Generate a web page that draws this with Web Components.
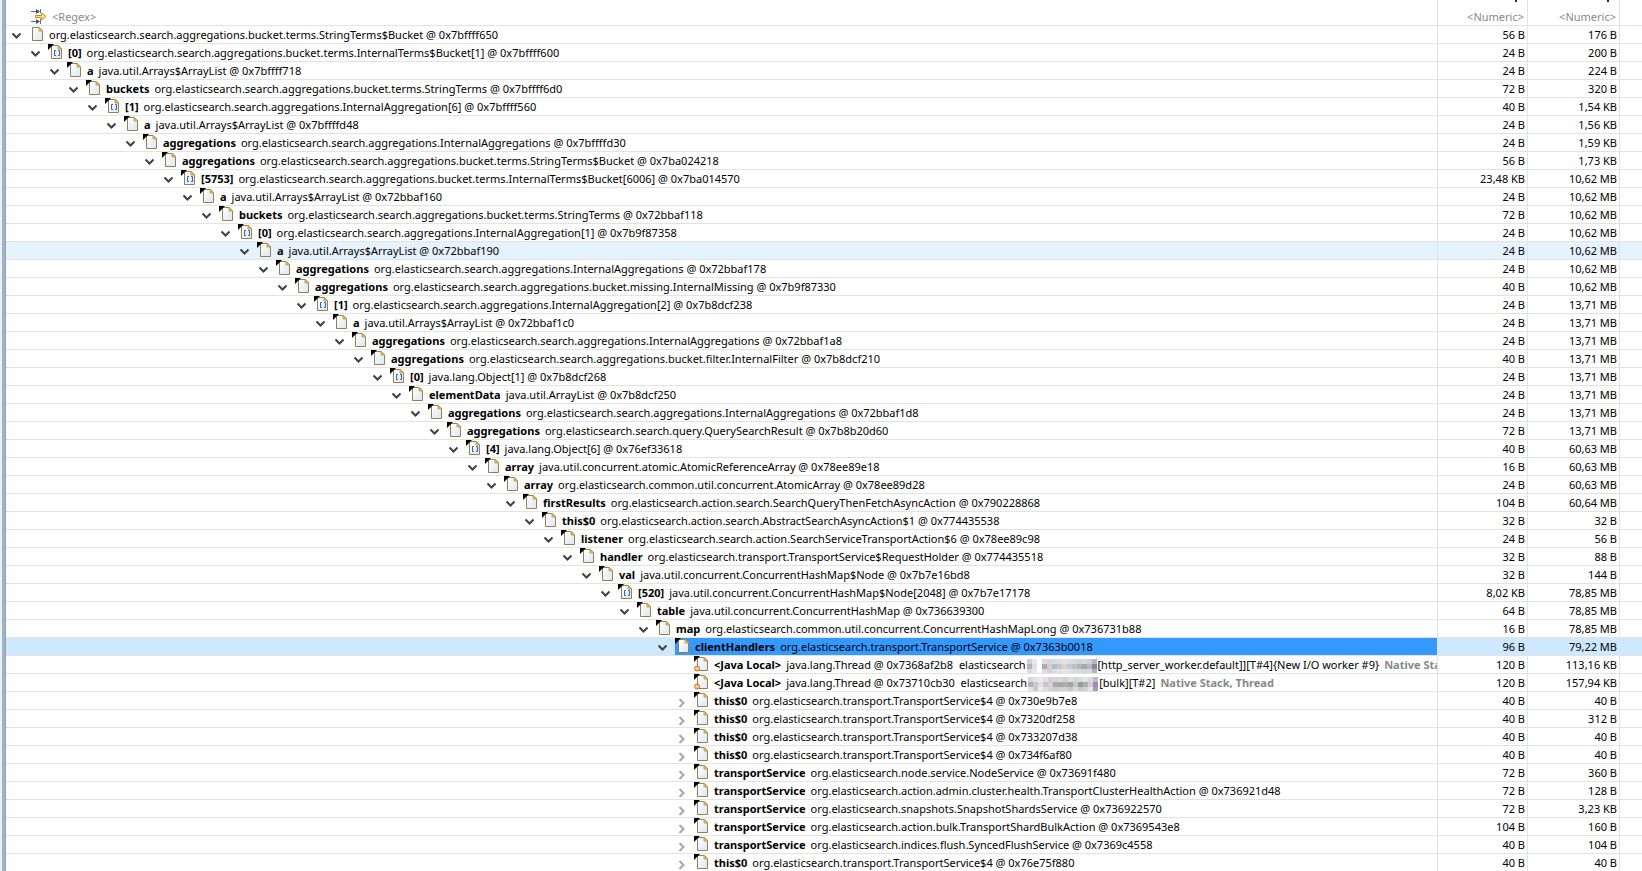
<!DOCTYPE html>
<html lang="en">
<head>
<meta charset="utf-8">
<title>Path to GC Roots</title>
<style>
    html, body { height: 100%; margin: 0; }
    body {
        overflow: hidden;
        background: #fff;
        color: #000;
        font-family: "Noto Sans", "Open Sans", sans-serif;
        font-size: 11px;
        line-height: 17px;
    }
</style>
</head>
<body>
<view-frame>
    <heap-tree></heap-tree>
</view-frame>

<script>
/**
 * <view-frame>
 * Left window border with the view inside
 */
class ViewFrame extends HTMLElement {
    constructor() {
        super();
        this.attachShadow({ mode: 'open' });
    }

    connectedCallback() {
        this.shadowRoot.innerHTML = `
            <style>
                :host {
                    display: grid;
                    grid-template-columns: 2px 3px 1px minmax(0, 1fr);
                    height: 100vh;
                    overflow: hidden;
                }
                .outer { background: #f0f0f0; }
                .accent { background: #99b4d1; }
                .inner { background: #a0a0a0; }
            </style>
            <div class="outer"></div>
            <div class="accent"></div>
            <div class="inner"></div>
            <main><slot></slot></main>
        `;
    }
}
customElements.define('view-frame', ViewFrame);


/**
 * <object-icon>
 * Attributes: kind (root | object | array | local | filter)
 */
const PAGE = `
    <path d="M3.5 1.5h7l3 3v10h-10z" fill="url(#sheet)" stroke="#94804a"/>
    <path d="M10 1.5v3.500h3.500z" fill="#e8c069" stroke="#c9a04c"/>`;
const CORNER = `<path d="M0 0h6l-6 6z" fill="#000"/>`;
const ICONS = {
    root: PAGE,
    object: PAGE + CORNER,
    array: PAGE + CORNER + `
        <path d="M8 6.5h-1.5v5h1.5M10 6.5h1.5v5h-1.5" fill="none" stroke="#2c68a6"/>`,
    local: PAGE + CORNER + `<circle cx="3" cy="12.5" r="2.5" fill="#fbc98a" stroke="#c9702a"/>`,
    filter: `
        <path d="M0 3.5h6M0 13.5h6M9.5 1v4M9.5 11v5" fill="none" stroke="#5b6f86"/>
        <path d="M5 1l4 2.5-4 2.5zM5 11l4 2.5-4 2.5z" fill="#3f566f"/>
        <path d="M4.5 7.5h6v-2.5l4.5 3.5-4.5 3.5v-2.5h-6z" fill="#fbe08c" stroke="#c28f2c"/>`
};

class ObjectIcon extends HTMLElement {
    constructor() {
        super();
        this.attachShadow({ mode: 'open' });
    }

    connectedCallback() {
        const kind = this.getAttribute('kind') || 'object';

        this.shadowRoot.innerHTML = `
            <style>
                :host { display: block; flex: none; width: 16px; height: 16px; }
                svg { display: block; }
            </style>
            <svg width="16" height="16" viewBox="0 0 16 16" aria-hidden="true">
                <defs>
                    <linearGradient id="sheet" x1="0" y1="0" x2="1" y2="1">
                        <stop offset="0" stop-color="#fff"/>
                        <stop offset="1" stop-color="#dbe6f6"/>
                    </linearGradient>
                </defs>
                ${ICONS[kind]}
            </svg>
        `;
    }
}
customElements.define('object-icon', ObjectIcon);


/**
 * <pixel-mask>
 * Mosaic over a hidden host name
 * Attributes: variant (0 | 1)
 */
const MOSAIC = [
    [
        ['#d3cfd3', '#e9e9ed', '#fff', '#dedbe0', '#dad5d2', '#d9dde2', '#dddde0', '#e4e1df', '#dcdfe1', '#d9dadc', '#d3d7d5', '#dad6dc', '#d5d0d8', '#bdb5c5'],
        ['#b9b2ba', '#dedee3', '#fff', '#b8aaa2', '#d0ccd2', '#b1bdc9', '#c6c6cc', '#d9d4d0', '#cbcacf', '#bcc0c8', '#b2b6b6', '#9fa9a3', '#bdb6c2', '#8f84a1'],
        ['#dcd8dc', '#e9e9ed', '#fff', '#e0dde1', '#d6d0ce', '#d9dfe4', '#e2e2e4', '#e6e3e1', '#dfe2e4', '#d9dbdd', '#d6dad7', '#d8d4db', '#dad6dd', '#b8b0c0']
    ],
    [
        ['#d9d4da', '#e6e3e7', '#e9e9e9', '#e2dfe3', '#d4ced2', '#d2d6da', '#dcd6d0', '#cfd1d5', '#dedfe2', '#d5d5d8', '#dadcda', '#e4e2e6', '#dcd8df', '#c2b8cc'],
        ['#b6aeb9', '#cdc7ce', '#e0e0e0', '#c8c4cb', '#d2ced3', '#b0a7ac', '#a0a8b0', '#b9aba0', '#9ea4ad', '#c5c6cd', '#9b9b9f', '#aeb2ae', '#d0ccd4', '#9a8cb0'],
        ['#e8e5e8', '#cdc7ce', '#eee', '#e0dde1', '#d6d2d6', '#cdc8cc', '#ccd1d5', '#d8d0c9', '#c4c7cc', '#dadbdf', '#c9c9cc', '#d1d4d2', '#e6e4e8', '#a99cbb']
    ]
];

class PixelMask extends HTMLElement {
    constructor() {
        super();
        this.attachShadow({ mode: 'open' });
    }

    connectedCallback() {
        const bands = MOSAIC[Number(this.getAttribute('variant')) || 0];
        const cells = bands.flat().map(color => `<i style="background:${color}"></i>`).join('');

        this.shadowRoot.innerHTML = `
            <style>
                :host {
                    display: inline-grid;
                    grid-template-columns: repeat(14, 5px);
                    grid-auto-rows: 5px;
                    margin: 0 1px;
                    vertical-align: middle;
                }
            </style>
            ${cells}
        `;
    }
}
customElements.define('pixel-mask', PixelMask);


/**
 * <tree-node>
 * Attributes: level, name, kind, state (open | closed | leaf), note, selected
 * Slot: class name and address
 */
const CHEVRONS = {
    open: '<path d="M4.5 7.5l4 4 4-4" stroke="#404040"/>',
    closed: '<path d="M6.5 7l4 4-4 4" stroke="#a6a6a6"/>'
};

class TreeNode extends HTMLElement {
    constructor() {
        super();
        this.attachShadow({ mode: 'open' });
    }

    connectedCallback() {
        const level = this.getAttribute('level') || 0;
        const name = this.getAttribute('name') || '';
        const kind = this.getAttribute('kind') || 'object';
        const state = this.getAttribute('state') || 'open';
        const note = this.getAttribute('note') || '';

        const toggle = state === 'leaf' ? '<span class="toggle"></span>' : `
            <button class="toggle" type="button" aria-expanded="${state === 'open'}" aria-label="Toggle">
                <svg width="16" height="17" viewBox="0 0 16 17" fill="none" stroke-width="2">${CHEVRONS[state]}</svg>
            </button>`;

        this.shadowRoot.innerHTML = `
            <style>
                :host {
                    display: flex;
                    height: 17px;
                    padding-left: calc(2px + ${level} * 19px);
                    white-space: nowrap;
                    overflow: hidden;
                }
                .toggle {
                    flex: none;
                    width: 16px; height: 17px;
                    margin: 0 5px 0 0; padding: 0;
                    border: 0; background: none;
                }
                svg { display: block; }
                .item { display: flex; flex: 1; gap: 4px; }
                :host([selected]) .item { background: #3399ff; }
                b { margin-right: 5px; }
                .note { margin-left: 5px; color: #888; font-weight: bold; }
            </style>
            ${toggle}
            <div class="item">
                <object-icon kind="${kind}"></object-icon>
                <span>${name ? `<b></b>` : ''}<slot></slot>${note ? `<span class="note">${note}</span>` : ''}</span>
            </div>
        `;
        if (name) this.shadowRoot.querySelector('b').textContent = name;
    }
}
customElements.define('tree-node', TreeNode);


/**
 * <filter-field>
 * Attributes: hint, label, align
 */
class FilterField extends HTMLElement {
    constructor() {
        super();
        this.attachShadow({ mode: 'open' });
    }

    connectedCallback() {
        this.shadowRoot.innerHTML = `
            <style>
                :host { display: block; flex: 1; }
                input {
                    display: block; box-sizing: border-box;
                    width: 100%; height: 17px;
                    padding: 0; border: 0; background: none;
                    font: inherit; text-align: ${this.getAttribute('align') || 'left'};
                }
                input::placeholder { color: #888; opacity: 1; }
            </style>
            <input type="text" placeholder="${this.getAttribute('hint')}" aria-label="${this.getAttribute('label')}">
        `;
    }
}
customElements.define('filter-field', FilterField);


// --- Rows: [name, object, shallow heap, retained heap] ---
const PATH = [
    ['', 'org.elasticsearch.search.aggregations.bucket.terms.StringTerms$Bucket @ 0x7bffff650', '56 B', '176 B'],
    ['[0]', 'org.elasticsearch.search.aggregations.bucket.terms.InternalTerms$Bucket[1] @ 0x7bffff600', '24 B', '200 B'],
    ['a', 'java.util.Arrays$ArrayList @ 0x7bffff718', '24 B', '224 B'],
    ['buckets', 'org.elasticsearch.search.aggregations.bucket.terms.StringTerms @ 0x7bffff6d0', '72 B', '320 B'],
    ['[1]', 'org.elasticsearch.search.aggregations.InternalAggregation[6] @ 0x7bffff560', '40 B', '1,54 KB'],
    ['a', 'java.util.Arrays$ArrayList @ 0x7bffffd48', '24 B', '1,56 KB'],
    ['aggregations', 'org.elasticsearch.search.aggregations.InternalAggregations @ 0x7bffffd30', '24 B', '1,59 KB'],
    ['aggregations', 'org.elasticsearch.search.aggregations.bucket.terms.StringTerms$Bucket @ 0x7ba024218', '56 B', '1,73 KB'],
    ['[5753]', 'org.elasticsearch.search.aggregations.bucket.terms.InternalTerms$Bucket[6006] @ 0x7ba014570', '23,48 KB', '10,62 MB'],
    ['a', 'java.util.Arrays$ArrayList @ 0x72bbaf160', '24 B', '10,62 MB'],
    ['buckets', 'org.elasticsearch.search.aggregations.bucket.terms.StringTerms @ 0x72bbaf118', '72 B', '10,62 MB'],
    ['[0]', 'org.elasticsearch.search.aggregations.InternalAggregation[1] @ 0x7b9f87358', '24 B', '10,62 MB'],
    ['a', 'java.util.Arrays$ArrayList @ 0x72bbaf190', '24 B', '10,62 MB'],
    ['aggregations', 'org.elasticsearch.search.aggregations.InternalAggregations @ 0x72bbaf178', '24 B', '10,62 MB'],
    ['aggregations', 'org.elasticsearch.search.aggregations.bucket.missing.InternalMissing @ 0x7b9f87330', '40 B', '10,62 MB'],
    ['[1]', 'org.elasticsearch.search.aggregations.InternalAggregation[2] @ 0x7b8dcf238', '24 B', '13,71 MB'],
    ['a', 'java.util.Arrays$ArrayList @ 0x72bbaf1c0', '24 B', '13,71 MB'],
    ['aggregations', 'org.elasticsearch.search.aggregations.InternalAggregations @ 0x72bbaf1a8', '24 B', '13,71 MB'],
    ['aggregations', 'org.elasticsearch.search.aggregations.bucket.filter.InternalFilter @ 0x7b8dcf210', '40 B', '13,71 MB'],
    ['[0]', 'java.lang.Object[1] @ 0x7b8dcf268', '24 B', '13,71 MB'],
    ['elementData', 'java.util.ArrayList @ 0x7b8dcf250', '24 B', '13,71 MB'],
    ['aggregations', 'org.elasticsearch.search.aggregations.InternalAggregations @ 0x72bbaf1d8', '24 B', '13,71 MB'],
    ['aggregations', 'org.elasticsearch.search.query.QuerySearchResult @ 0x7b8b20d60', '72 B', '13,71 MB'],
    ['[4]', 'java.lang.Object[6] @ 0x76ef33618', '40 B', '60,63 MB'],
    ['array', 'java.util.concurrent.atomic.AtomicReferenceArray @ 0x78ee89e18', '16 B', '60,63 MB'],
    ['array', 'org.elasticsearch.common.util.concurrent.AtomicArray @ 0x78ee89d28', '24 B', '60,63 MB'],
    ['firstResults', 'org.elasticsearch.action.search.SearchQueryThenFetchAsyncAction @ 0x790228868', '104 B', '60,64 MB'],
    ['this$0', 'org.elasticsearch.action.search.AbstractSearchAsyncAction$1 @ 0x774435538', '32 B', '32 B'],
    ['listener', 'org.elasticsearch.search.action.SearchServiceTransportAction$6 @ 0x78ee89c98', '24 B', '56 B'],
    ['handler', 'org.elasticsearch.transport.TransportService$RequestHolder @ 0x774435518', '32 B', '88 B'],
    ['val', 'java.util.concurrent.ConcurrentHashMap$Node @ 0x7b7e16bd8', '32 B', '144 B'],
    ['[520]', 'java.util.concurrent.ConcurrentHashMap$Node[2048] @ 0x7b7e17178', '8,02 KB', '78,85 MB'],
    ['table', 'java.util.concurrent.ConcurrentHashMap @ 0x736639300', '64 B', '78,85 MB'],
    ['map', 'org.elasticsearch.common.util.concurrent.ConcurrentHashMapLong @ 0x736731b88', '16 B', '78,85 MB'],
    ['clientHandlers', 'org.elasticsearch.transport.TransportService @ 0x7363b0018', '96 B', '79,22 MB']
];

// Children of the last node of the path
const CHILDREN = [
    ['<Java Local>', 'java.lang.Thread @ 0x7368af2b8 &nbsp;elasticsearch<pixel-mask variant="0"></pixel-mask>[http_server_worker.default]][T#4]{New I/O worker #9}', '120 B', '113,16 KB', 'Native Stack, Thread'],
    ['<Java Local>', 'java.lang.Thread @ 0x73710cb30 &nbsp;elasticsearch<pixel-mask variant="1"></pixel-mask>[bulk][T#2]', '120 B', '157,94 KB', 'Native Stack, Thread'],
    ['this$0', 'org.elasticsearch.transport.TransportService$4 @ 0x730e9b7e8', '40 B', '40 B'],
    ['this$0', 'org.elasticsearch.transport.TransportService$4 @ 0x7320df258', '40 B', '312 B'],
    ['this$0', 'org.elasticsearch.transport.TransportService$4 @ 0x733207d38', '40 B', '40 B'],
    ['this$0', 'org.elasticsearch.transport.TransportService$4 @ 0x734f6af80', '40 B', '40 B'],
    ['transportService', 'org.elasticsearch.node.service.NodeService @ 0x73691f480', '72 B', '360 B'],
    ['transportService', 'org.elasticsearch.action.admin.cluster.health.TransportClusterHealthAction @ 0x736921d48', '72 B', '128 B'],
    ['transportService', 'org.elasticsearch.snapshots.SnapshotShardsService @ 0x736922570', '72 B', '3,23 KB'],
    ['transportService', 'org.elasticsearch.action.bulk.TransportShardBulkAction @ 0x7369543e8', '104 B', '160 B'],
    ['transportService', 'org.elasticsearch.indices.flush.SyncedFlushService @ 0x7369c4558', '40 B', '104 B'],
    ['this$0', 'org.elasticsearch.transport.TransportService$4 @ 0x76e75f880', '40 B', '40 B']
];

const HOVERED = 12;
const SELECTED = PATH.length - 1;


/**
 * <heap-tree>
 * Tree table with a filter row on top
 */
class HeapTree extends HTMLElement {
    constructor() {
        super();
        this.attachShadow({ mode: 'open' });
    }

    connectedCallback() {
        this.render();
    }

    row([name, text, shallow, retained, note = ''], index) {
        const level = Math.min(index, PATH.length);
        const leaf = note !== '';
        const state = leaf ? 'leaf' : index < PATH.length ? 'open' : 'closed';
        const kind = !name ? 'root' : leaf ? 'local' : name.startsWith('[') ? 'array' : 'object';
        const rowClass = index === HOVERED ? 'hovered' : index === SELECTED ? 'selected' : '';
        const label = name.replace('<', '&lt;').replace('>', '&gt;');

        return `
            <tr class="${rowClass}">
                <td><tree-node level="${level}" name="${label}" kind="${kind}" state="${state}"
                    note="${note}" ${index === SELECTED ? 'selected' : ''}>${text}</tree-node></td>
                <td class="size">${shallow}</td>
                <td class="size">${retained}</td>
                <td></td>
            </tr>`;
    }

    render() {
        this.shadowRoot.innerHTML = `
            <style>
                :host { display: block; }
                table {
                    width: 100%;
                    table-layout: fixed;
                    border-collapse: separate;
                    border-spacing: 0;
                }
                .number { width: 90px; }
                .wide { width: 92px; }
                .rest { width: 22px; }
                th, td {
                    height: 17px;
                    padding: 0;
                    border: solid #e3e3e3;
                    border-width: 0 1px 1px 0;
                    font-weight: normal;
                }
                th:last-child, td:last-child { border-right: 0; }
                th { padding-top: 8px; }
                .filter { display: flex; gap: 5px; padding-left: 25px; }
                .size { padding-right: 2px; text-align: right; white-space: nowrap; }
                /* Tail of the column title that is scrolled out above */
                th.size {
                    padding-right: 3px;
                    background: linear-gradient(#402040, #402040) right 10px top 0 / 2px 2px no-repeat;
                }
                .hovered { background: #e5f3ff; }
                .selected { background: #cde8ff; }
            </style>
            <table>
                <colgroup><col><col class="number"><col class="wide"><col class="rest"></colgroup>
                <thead>
                    <tr>
                        <th>
                            <div class="filter">
                                <object-icon kind="filter"></object-icon>
                                <filter-field hint="&lt;Regex&gt;" label="Class name filter"></filter-field>
                            </div>
                        </th>
                        <th class="size"><filter-field hint="&lt;Numeric&gt;" label="Shallow heap filter" align="right"></filter-field></th>
                        <th class="size"><filter-field hint="&lt;Numeric&gt;" label="Retained heap filter" align="right"></filter-field></th>
                        <th></th>
                    </tr>
                </thead>
                <tbody>${[...PATH, ...CHILDREN].map((item, i) => this.row(item, i)).join('')}</tbody>
            </table>
        `;
    }
}
customElements.define('heap-tree', HeapTree);
</script>
</body>
</html>
